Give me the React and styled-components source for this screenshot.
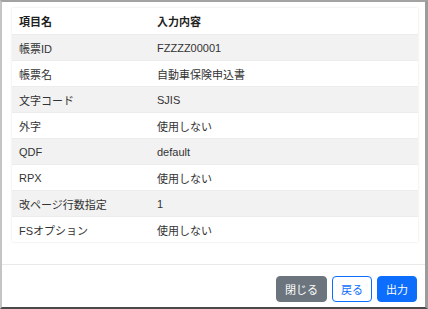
import React from "react";
import styled, { createGlobalStyle } from "styled-components";

const GlobalStyle = createGlobalStyle`
  html, body {
    margin: 0;
    padding: 0;
    background: #ffffff;
  }
  body {
    font-family: "Liberation Sans", "Noto Sans CJK JP", sans-serif;
  }
`;

const Frame = styled("div")`
  box-sizing: border-box;
  width: 428px;
  height: 309px;
  display: flex;
  flex-direction: column;
  background: #ffffff;
  border-top: 2px solid #a3a3a3;
  border-left: 2px solid #c4c4c4;
  border-right: 3px solid #9c9c9c;
  border-bottom: 2px solid #4a4a4a;
`;

const Body = styled("div")`
  flex: 1;
  padding: 6px 7px 0 10px;
`;

const Card = styled("div")`
  background: #ffffff;
  box-shadow: 0 0 2px rgba(0, 0, 0, 0.12);
`;

const Table = styled("table")`
  width: 100%;
  table-layout: fixed;
  border-collapse: collapse;
  font-size: 11px;
  color: #333333;
`;

const HeadCell = styled("th")`
  height: 26px;
  padding: 0 7px;
  text-align: left;
  font-weight: bold;
  color: #1f1f1f;
  width: ${(p) => (p.$first ? "124px" : "auto")};
`;

const Row = styled("tr")`
  background: ${(p) => (p.$striped ? "#f2f2f2" : "#ffffff")};
  border-top: 1px solid #ececec;
`;

const Cell = styled("td")`
  height: 25px;
  padding: 0 7px;
  white-space: nowrap;
`;

const Footer = styled("div")`
  display: flex;
  justify-content: flex-end;
  gap: 5px;
  border-top: 1px solid #e9e9e9;
  padding: 11px 8px 5px;
`;

const Button = styled("button")`
  box-sizing: border-box;
  height: 26px;
  padding: 0 8px;
  border-radius: 4px;
  font-family: "Noto Sans CJK JP", sans-serif;
  font-size: 11px;
  line-height: 1;
  cursor: pointer;
  border: 1px solid
    ${(p) =>
      p.$variant === "secondary" ? "#6c757d" : "#0d6efd"};
  background: ${(p) =>
    p.$variant === "secondary"
      ? "#6c757d"
      : p.$variant === "outline"
      ? "#ffffff"
      : "#0d6efd"};
  color: ${(p) => (p.$variant === "outline" ? "#0d6efd" : "#ffffff")};
`;

const rows = [
  ["帳票ID", "FZZZZ00001"],
  ["帳票名", "自動車保険申込書"],
  ["文字コード", "SJIS"],
  ["外字", "使用しない"],
  ["QDF", "default"],
  ["RPX", "使用しない"],
  ["改ページ行数指定", "1"],
  ["FSオプション", "使用しない"],
];

export default () => {
  return (
    <>
      <GlobalStyle />
      <Frame>
        <Body>
          <Card>
            <Table>
              <thead>
                <tr>
                  <HeadCell $first>項目名</HeadCell>
                  <HeadCell>入力内容</HeadCell>
                </tr>
              </thead>
              <tbody>
                {rows.map(([label, value], i) => (
                  <Row key={label} $striped={i % 2 === 0}>
                    <Cell>{label}</Cell>
                    <Cell>{value}</Cell>
                  </Row>
                ))}
              </tbody>
            </Table>
          </Card>
        </Body>
        <Footer>
          <Button $variant="secondary">閉じる</Button>
          <Button $variant="outline">戻る</Button>
          <Button>出力</Button>
        </Footer>
      </Frame>
    </>
  );
};
